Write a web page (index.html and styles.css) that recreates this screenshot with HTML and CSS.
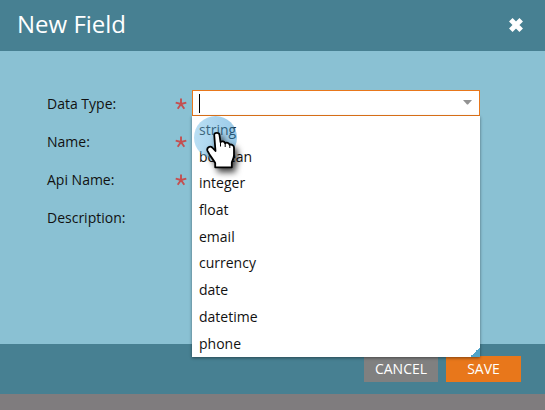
FILE: index.html
```
<!DOCTYPE html>
<html lang="en">
<head>
<meta charset="utf-8">
<title>New Field</title>
<link rel="stylesheet" href="styles.css">
</head>
<body>
<div class="dialog">
  <header class="header">
    <h1>New Field</h1>
    <svg class="close" width="16" height="16" viewBox="0 0 16 16"><path d="M2.8 2.8L13.2 13.2M13.2 2.8L2.8 13.2"/></svg>
  </header>
  <main class="form">
    <div class="row">
      <label>Data Type:</label>
      <svg class="star" width="12" height="12" viewBox="0 0 12 12"><path d="M6 6V.5M6 6L.7 4.6M6 6L11.3 4.6M6 6L2.7 10.8M6 6L9.3 10.8"/></svg>
      <div class="combo">
        <div class="input"><span class="caret"></span><svg class="arrow" width="9" height="5" viewBox="0 0 9 5"><path d="M0 0H9L5 4.5H4Z"/></svg></div>
        <ul class="menu">
          <li>string</li><li>boolean</li><li>integer</li><li>float</li><li>email</li><li>currency</li><li>date</li><li>datetime</li><li>phone</li>
        </ul>
      </div>
    </div>
    <div class="row">
      <label>Name:</label>
      <svg class="star" width="12" height="12" viewBox="0 0 12 12"><path d="M6 6V.5M6 6L.7 4.6M6 6L11.3 4.6M6 6L2.7 10.8M6 6L9.3 10.8"/></svg>
    </div>
    <div class="row">
      <label>Api Name:</label>
      <svg class="star" width="12" height="12" viewBox="0 0 12 12"><path d="M6 6V.5M6 6L.7 4.6M6 6L11.3 4.6M6 6L2.7 10.8M6 6L9.3 10.8"/></svg>
    </div>
    <div class="row"><label>Description:</label></div>
  </main>
  <footer class="footer">
    <button class="cancel">CANCEL</button>
    <button class="save">SAVE</button>
  </footer>
</div>
<div class="highlight"></div>
<svg class="hand" width="30" height="38" viewBox="0 0 30 38">
  <path d="M9.2 3.8C9.2 1.1 14.2 1.1 14.5 3.8L15.5 11.2C16.7 9.8 19.6 10.2 20.1 12.3C21.5 11.2 24.2 11.7 24.6 13.8C26.2 13 29 14.2 29 16.8V24C29 27.5 27.3 29.5 26.8 31.5V36.3H10.2V32C8.5 29 5.1 25 2.5 19.8C1.3 17 4.8 14.4 7.2 16.5L10.5 20Z"/>
  <path class="knuckles" d="M15.5 11V15.5M20.2 12.5V16M24.8 14V17"/>
</svg>
</body>
</html>
```
FILE: styles.css
```
* { box-sizing: border-box; }
body {
  margin: 0;
  height: 410px;
  overflow: hidden;
  background: #7f7c7e;
  color: #111;
  font: 14px/20px "Open Sans", "Noto Sans", sans-serif;
}
.dialog { height: 394px; display: flex; flex-direction: column; }
.header {
  height: 51px;
  padding: 0 21px 1px 17px;
  display: flex;
  align-items: center;
  justify-content: space-between;
  background: #478092;
}
h1 { margin: 0 0 2px; font-size: 24px; line-height: 32px; font-weight: 400; color: #fff; }
.close { fill: none; stroke: #fff; stroke-width: 5; }
.form { height: 293px; padding: 34px 65px 0 47px; background: #8ac1d3; }
.row { height: 38px; display: flex; align-items: center; }
label { width: 128px; }
.star { margin-right: 5px; fill: none; stroke: #c44f50; stroke-width: 1.9; }
.combo { position: relative; width: 288px; height: 26px; margin-bottom: 2px; }
.input {
  height: 26px;
  padding: 0 7px 0 6px;
  display: flex;
  align-items: center;
  justify-content: space-between;
  border: 1px solid #e8771b;
  background: #fff;
}
.caret { width: 1px; height: 19px; margin-top: 1px; background: #000; }
.arrow { fill: #929292; margin-bottom: 1px; }
.menu {
  position: absolute;
  z-index: 2;
  top: 26px;
  left: 0;
  width: 288px;
  height: 241px;
  margin: 0;
  padding: 1px 0 0 7px;
  list-style: none;
  background: linear-gradient(135deg, transparent 50%, #50a4ca 50%) right bottom / 10px 10px no-repeat #fff;
  box-shadow: 0 1px 3px rgba(0, 0, 0, .45);
}
.menu li { height: 26.7px; line-height: 26.7px; }
.footer {
  height: 50px;
  padding: 12px 24px 0 0;
  display: flex;
  justify-content: flex-end;
  gap: 8px;
  background: #478092;
}
button {
  height: 26px;
  padding: 0;
  border: 0;
  color: #fff;
  font: inherit;
}
.cancel { width: 74px; background: #808080; }
.save { width: 75px; background: #e8771b; }
.highlight {
  position: absolute;
  z-index: 3;
  left: 194px;
  top: 116px;
  width: 43px;
  height: 43px;
  border-radius: 50%;
  background: linear-gradient(90deg, rgba(117, 191, 233, .5), rgba(55, 149, 209, .5));
}
.hand {
  position: absolute;
  z-index: 4;
  left: 205px;
  top: 131px;
  overflow: visible;
  fill: #fff;
  stroke: #000;
  stroke-width: 1.8;
  stroke-linejoin: round;
  filter: drop-shadow(3px 4px 3px rgba(0, 0, 0, .75));
}
.knuckles { fill: none; stroke-width: 1; }
```
